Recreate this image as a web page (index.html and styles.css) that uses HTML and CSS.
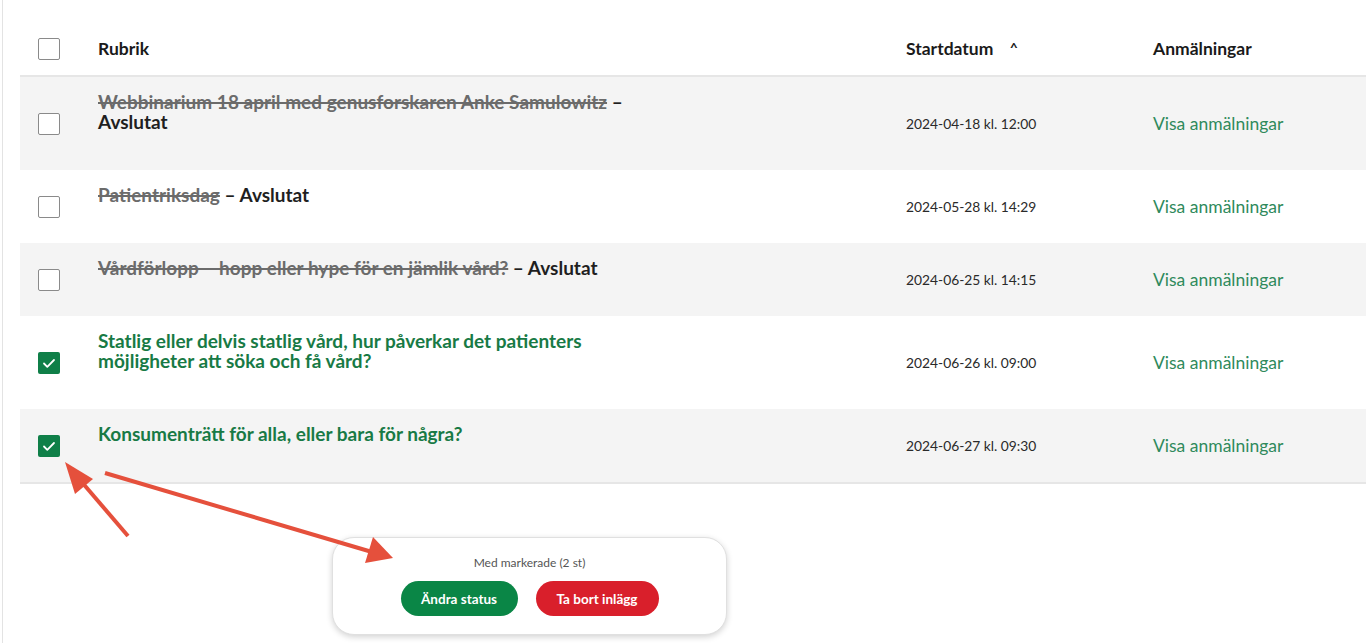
FILE: index.html
```html
<!DOCTYPE html>
<html lang="sv">
<head>
<meta charset="utf-8">
<title>Evenemang</title>
<link rel="stylesheet" href="styles.css">
</head>
<body>
<div class="page">
  <table class="list">
    <thead>
      <tr>
        <th class="c-check"><span class="box"></span></th>
        <th class="c-title">Rubrik</th>
        <th class="c-date">Startdatum <span class="caret">^</span></th>
        <th class="c-reg">Anmälningar</th>
      </tr>
    </thead>
    <tbody>
      <tr class="alt">
        <td class="c-check"><span class="box"></span></td>
        <td class="c-title"><div class="title"><s>Webbinarium 18 april med genusforskaren Anke Samulowitz</s> <span class="status">– Avslutat</span></div></td>
        <td class="c-date">2024-04-18 kl. 12:00</td>
        <td class="c-reg"><a href="#">Visa anmälningar</a></td>
      </tr>
      <tr>
        <td class="c-check"><span class="box"></span></td>
        <td class="c-title"><div class="title"><s>Patientriksdag</s> <span class="status">– Avslutat</span></div></td>
        <td class="c-date">2024-05-28 kl. 14:29</td>
        <td class="c-reg"><a href="#">Visa anmälningar</a></td>
      </tr>
      <tr class="alt">
        <td class="c-check"><span class="box"></span></td>
        <td class="c-title"><div class="title"><s>Vårdförlopp – hopp eller hype för en jämlik vård?</s> <span class="status">– Avslutat</span></div></td>
        <td class="c-date">2024-06-25 kl. 14:15</td>
        <td class="c-reg"><a href="#">Visa anmälningar</a></td>
      </tr>
      <tr>
        <td class="c-check"><span class="box checked"><svg viewBox="0 0 22 22" width="22" height="22"><path d="M6 11.5l3.3 3.3L16 8" fill="none" stroke="#fff" stroke-width="1.8" stroke-linecap="round" stroke-linejoin="round"/></svg></span></td>
        <td class="c-title"><div class="title active">Statlig eller delvis statlig vård, hur påverkar det patienters möjligheter att söka och få vård?</div></td>
        <td class="c-date">2024-06-26 kl. 09:00</td>
        <td class="c-reg"><a href="#">Visa anmälningar</a></td>
      </tr>
      <tr class="alt">
        <td class="c-check"><span class="box checked"><svg viewBox="0 0 22 22" width="22" height="22"><path d="M6 11.5l3.3 3.3L16 8" fill="none" stroke="#fff" stroke-width="1.8" stroke-linecap="round" stroke-linejoin="round"/></svg></span></td>
        <td class="c-title"><div class="title active">Konsumenträtt för alla, eller bara för några?</div></td>
        <td class="c-date">2024-06-27 kl. 09:30</td>
        <td class="c-reg"><a href="#">Visa anmälningar</a></td>
      </tr>
    </tbody>
  </table>

  <div class="bulk">
    <div class="bulk-label">Med markerade (2 st)</div>
    <div class="bulk-actions">
      <button class="btn btn-green">Ändra status</button>
      <button class="btn btn-red">Ta bort inlägg</button>
    </div>
  </div>

  <svg class="arrows" width="1366" height="643" viewBox="0 0 1366 643">
    <g stroke="#e5503c" stroke-width="4" stroke-linecap="butt" fill="#e5503c">
      <line x1="128" y1="536" x2="80" y2="480"/>
      <polygon points="65,462 93,479 75,494" stroke="none"/>
      <line x1="105" y1="473" x2="372" y2="552"/>
      <polygon points="393,558 365,563 373,537" stroke="none"/>
    </g>
  </svg>
</div>
</body>
</html>
```

FILE: styles.css
```css
html, body {
  margin: 0;
  padding: 0;
  background: #fff;
}

body {
  font-family: "Lato", "Liberation Sans", sans-serif;
  color: #222;
}

.page {
  position: relative;
  width: 1364px;
  height: 643px;
  overflow: hidden;
  box-sizing: border-box;
  border-left: 1px solid #e3e3e3;
  padding: 22px 0 0 17px;
  margin-left: 2px;
}

.list {
  border-collapse: collapse;
  width: 1346px;
  table-layout: fixed;
}

.list th {
  height: 53px;
  text-align: left;
  font-size: 17.5px;
  font-weight: 700;
  color: #1a1a1a;
  padding: 0;
  vertical-align: middle;
  border-bottom: 2px solid #e6e6e6;
}

.list tbody tr:last-child td {
  border-bottom: 2px solid #e6e6e6;
}

.list td {
  padding: 0;
  vertical-align: middle;
}

.list tr.alt td {
  background: #f4f4f4;
}

.c-check {
  width: 78px;
}

.c-check .box {
  display: block;
  margin-left: 18px;
}

.c-title {
  width: 808px;
}

.c-date {
  width: 247px;
  font-size: 13.8px;
  color: #2a2a2a;
}

.caret {
  display: inline-block;
  margin-left: 12px;
  font-size: 14px;
  position: relative;
  top: -2px;
}

.box {
  width: 22px;
  height: 22px;
  box-sizing: border-box;
  border: 1px solid #8a8a8a;
  border-radius: 2px;
  background: #fff;
}

.box.checked {
  border: none;
  background: #0f7f48;
}

.box svg {
  display: block;
}

.title {
  max-width: 560px;
  padding: 15px 0 38px;
  font-size: 19px;
  line-height: 20px;
  font-weight: 700;
  color: #6b6b6b;
}

.title s {
  text-decoration-thickness: 1.5px;
}

.title .status {
  color: #1f1f1f;
  font-weight: 700;
}

.title.active {
  color: #187a45;
}

.c-reg a {
  font-size: 17.5px;
  color: #2f8a5c;
  text-decoration: none;
}

.bulk {
  position: absolute;
  left: 329px;
  top: 537px;
  width: 395px;
  height: 98px;
  box-sizing: border-box;
  border: 1px solid #e0e0e0;
  border-radius: 22px;
  background: #fff;
  box-shadow: 0 2px 6px rgba(0, 0, 0, 0.18);
  display: flex;
  flex-direction: column;
  align-items: center;
  padding-top: 17px;
  gap: 10px;
}

.bulk-label {
  font-size: 12px;
  color: #555;
  line-height: 16px;
}

.bulk-actions {
  display: flex;
  gap: 18px;
}

.btn {
  height: 35px;
  border: none;
  border-radius: 18px;
  color: #fff;
  font-family: "Lato", "Liberation Sans", sans-serif;
  font-size: 13.5px;
  font-weight: 700;
  padding: 0;
}

.btn-green {
  background: #0a8646;
  width: 117px;
}

.btn-red {
  background: #d91f2b;
  width: 123px;
}

.arrows {
  position: absolute;
  left: -3px;
  top: 0;
  pointer-events: none;
}
```
